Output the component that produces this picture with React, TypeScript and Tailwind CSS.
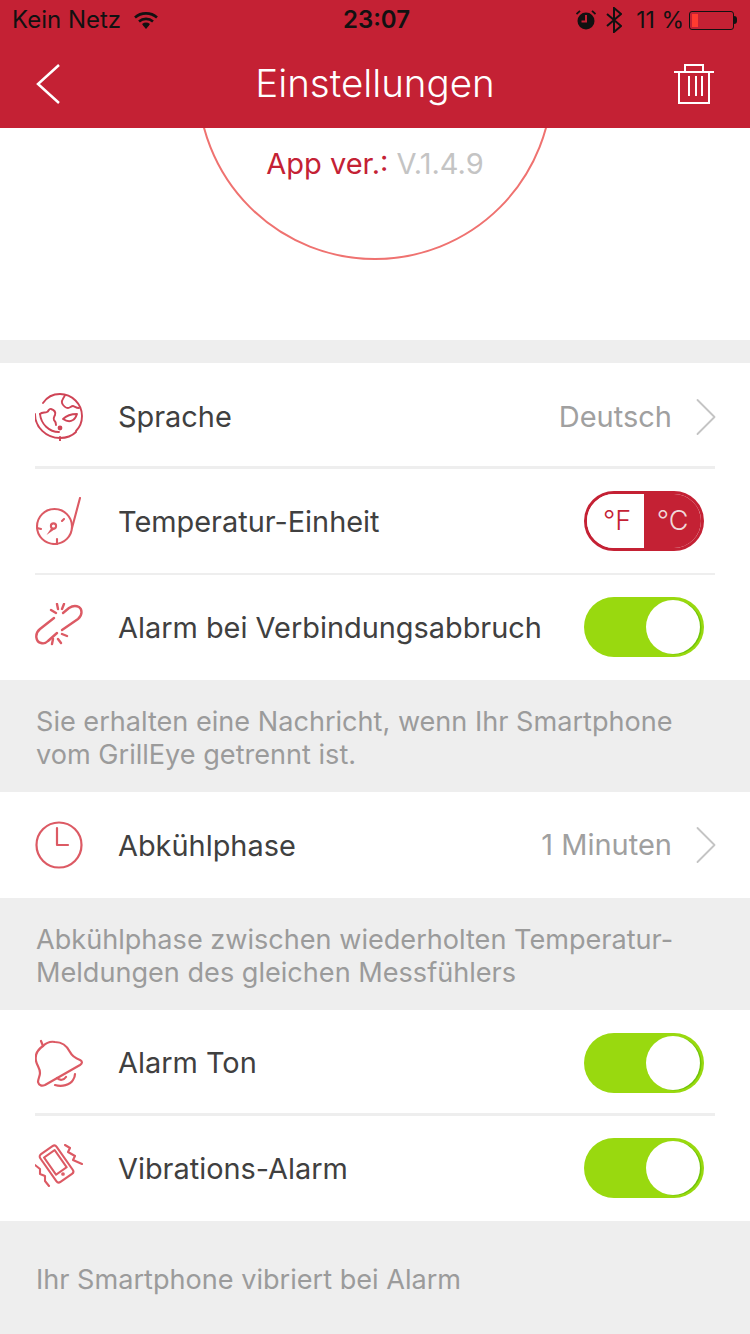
import { ChevronRight } from 'lucide-react';
import type { ReactNode } from 'react';

const iconClass = 'w-[48px] h-[48px] shrink-0 mr-[35px] fill-none stroke-[#dc5a64]';

function GlobeIcon() {
  return (
    <svg viewBox="0 0 48 48" className={iconClass} style={{ stroke: '#cf4456' }} strokeWidth="1.9" strokeLinecap="round" strokeLinejoin="round">
      <path d="M8 10C12 4 18 1 25 1c12 0 22 10 22 22 0 6-2 11-6 15" />
      <path d="M0 21c0 13 11 24 25 24 7 0 12-2 16-6M5 21c1 10 9 18 19 18M25 44v4" />
      <path d="M5 21c2-2 5-1 7-2 2-1 2-4 4-3 3 1 5 3 4 6-1 2-2 3-1 5 1 1 2 3 2 5" />
      <path d="M30 2c-1 3-4 5-3 8 1 3 4 5 6 5 2 0 3-2 5-2 1 0 3 2 6 2" />
      <path d="M28 26c3-3 7-5 14-5-1 3-2 5-4 6-3 2-7 1-10-1z" />
      <circle cx="25" cy="35" r="2.400" fill="#cf4456" stroke="none" />
    </svg>
  );
}

function ProbeIcon() {
  return (
    <svg viewBox="0 0 48 48" className={iconClass} strokeWidth="2.100" strokeLinecap="round">
      <circle cx="19.500" cy="29.500" r="17.500" />
      <path d="M37 31L45 1M2 31l4 1M22 47v-5M29 22l-2 2" />
      <path d="M11.500 38l5.500-8 3 2z" fill="#dc5a64" stroke="none" />
      <circle cx="18.500" cy="29" r="2.600" fill="#fff" />
    </svg>
  );
}

function BrokenLinkIcon() {
  return (
    <svg viewBox="0 0 48 48" className={iconClass} strokeWidth="2.400" strokeLinecap="round" strokeLinejoin="round">
      <path d="M19 15L5 26C-1 31 1 39 6 40c3 1 5 0 7-2l9-8" />
      <path d="M27 27L43 16c5-4 4-10 1-12-4-2-7-1-10 1l-6 5" />
      <path d="M16 7l5 3M22 1l1 5M29 1l-2 5M27 31l5 2M23 36l3 4M18 36l-1 5" />
    </svg>
  );
}

function ClockIcon() {
  return (
    <svg viewBox="0 0 48 48" className={iconClass} strokeWidth="2.200" strokeLinecap="round" strokeLinejoin="round">
      <circle cx="24" cy="24" r="22.500" />
      <path d="M22 7v17h11" />
    </svg>
  );
}

function BellIcon() {
  return (
    <svg viewBox="0 0 48 48" className={iconClass} strokeWidth="2.200" strokeLinecap="round" strokeLinejoin="round">
      <path d="M8 7C2 11 0 17 1 22c1 5 4 7 4 12 0 3-2 6-2 9 1 4 4 4 7 3l35-20c3-2 2-4 0-5-5-2-8-4-10-8C32 7 27 3 20 3 15 2 11 4 8 7z" />
      <path d="M8 7L6 2M22 39c3 3 7 2 9-1M20 46c7 2 15 0 18-5 2-3 2-6 2-6" />
    </svg>
  );
}

function VibrateIcon() {
  return (
    <svg viewBox="0 0 48 48" className={iconClass} strokeWidth="2.100" strokeLinecap="round" strokeLinejoin="round">
      <rect x="11.500" y="3" width="20" height="34" rx="3" transform="rotate(-35 21.500 20)" />
      <rect x="15" y="7.500" width="13" height="21" transform="rotate(-35 21.500 20)" />
      <circle cx="28" cy="30" r="0.800" />
      <path d="M30 1l5 3-2 4 7 4-2 4 9 4M0 21l5 4v5l5 2v5l4 5" />
    </svg>
  );
}

function Chevron() {
  return <ChevronRight size={68} strokeWidth={0.65} className="text-[#c4c4c4] -my-[14px] -mr-[25px]" />;
}

function Toggle() {
  return (
    <div className="w-[120px] h-[60px] mr-[11px] rounded-full bg-[#99d90f] flex items-center justify-end pr-[4px]">
      <div className="w-[54px] h-[54px] rounded-full bg-white shadow-[1.5px_0.5px_0_#6fc408]" />
    </div>
  );
}

function UnitSwitch() {
  return (
    <div className="w-[120px] h-[60px] mr-[11px] rounded-full border-[3px] border-[#c42134] flex overflow-hidden text-[27px] font-light">
      <div className="w-[57px] flex items-center justify-center text-[#c42134] bg-white pl-[3px] pt-[1px]">°F</div>
      <div className="flex-1 flex items-center justify-center text-[#f0d8da] bg-[#c42134] pt-[1px]">°C</div>
    </div>
  );
}

function Row({ icon, label, right, h }: { icon: ReactNode; label: string; right?: ReactNode; h: string }) {
  return (
    <div className={`flex items-center ${h}`}>
      {icon}
      <span className="flex-1 text-[28.900px] text-[#404040] pt-[1px]">{label}</span>
      {right}
    </div>
  );
}

function Value({ children }: { children: string }) {
  return <span className="text-[29px] text-[#a0a0a0]">{children}</span>;
}

function Note({ children, h }: { children: ReactNode; h: string }) {
  return (
    <div className={`bg-[#eeeeee] px-[36px] pt-[3px] flex items-center text-[27.100px] leading-[33px] text-[#9b9b9b] ${h}`}>
      <p>{children}</p>
    </div>
  );
}

function Divider() {
  return <div className="h-[3px] bg-[#eeeeee]" />;
}

export default function App() {
  return (
    <div className="w-[750px] h-[1334px] overflow-hidden bg-white font-['Inter',sans-serif]">
      <header className="h-[128px] bg-[#c42134]">
        <div className="h-[40px] flex items-center justify-between pl-[12px] pr-[13px] text-[#111]">
          <div className="flex-1 flex items-center gap-[13px] text-[24px]">
            <span>Kein Netz</span>
            <svg viewBox="0 0 24 18" className="w-[24px] h-[18px]" fill="none" stroke="#111" strokeWidth="2.600">
              <path d="M1 6.500c6-5.500 16-5.500 22 0M5 10.500c4-3.500 10-3.500 14 0M8.800 14c2-1.500 4.400-1.500 6.400 0" />
              <path d="M12 18l-3-3.500c2-1.500 4-1.500 6 0z" fill="#111" stroke="none" />
            </svg>
          </div>
          <span className="font-semibold text-[24px] ml-[4px]">23:07</span>
          <div className="flex-1 flex items-center justify-end text-[23px]">
            <svg viewBox="0 0 20 20" className="w-[20px] h-[20px] mr-[10px]">
              <circle cx="10" cy="11" r="8.500" fill="#111" />
              <path d="M10 5v6.500H5.500" stroke="#c42134" strokeWidth="2" fill="none" />
              <path d="M0.500 4L4 0.800M19.500 4L16 0.800" stroke="#111" strokeWidth="1.800" />
            </svg>
            <svg viewBox="0 0 16 26" className="w-[16px] h-[26px] mr-[14px]" fill="none" stroke="#111" strokeWidth="2">
              <path d="M1 7l14 12-7 6V1l7 6L1 19" />
            </svg>
            <span className="mr-[5px]">11 %</span>
            <div className="w-[45px] h-[19px] border border-[#111] rounded-[3px] p-[2px]">
              <div className="w-[6px] h-full bg-[#ff3b30]" />
            </div>
            <div className="w-[3px] h-[8px] bg-[#111] rounded-r-sm" />
          </div>
        </div>
        <div className="h-[88px] flex items-center px-[36px]">
          <div className="w-[40px]">
            <svg viewBox="0 0 24 40" className="w-[24px] h-[40px]" fill="none" stroke="#fff" strokeWidth="2.500">
              <path d="M23 1L2 20l21 19" />
            </svg>
          </div>
          <h1 className="flex-1 text-center text-[38.500px] font-light text-white">Einstellungen</h1>
          <svg viewBox="0 0 40 40" className="w-[40px] h-[40px]" fill="none" stroke="#fff" strokeWidth="2">
            <path d="M0 8h40M5 8v31h30V8M11 8V1h18v7M15 12v20M22 12v20M28 12v20" />
          </svg>
        </div>
      </header>

      <section className="h-[212px] overflow-hidden flex flex-col items-center">
        <div className="w-[356px] h-[356px] shrink-0 -mt-[224px] rounded-full border-2 border-[#ef7270] flex items-end justify-center pb-[73px] text-[29px]">
          <p><span className="text-[#c42134]">App ver.: </span><span className="text-[#c4c4c4]">V.1.4.9</span></p>
        </div>
      </section>

      <div className="h-[23px] bg-[#eeeeee]" />

      <div className="px-[35px]">
        <Row h="h-[103px] pt-[4px]" icon={<GlobeIcon />} label="Sprache" right={<><Value>Deutsch</Value><Chevron /></>} />
        <Divider />
        <Row h="h-[104px]" icon={<ProbeIcon />} label="Temperatur-Einheit" right={<UnitSwitch />} />
        <div className="h-[2px] bg-[#eeeeee]" />
        <Row h="h-[105px] pb-[1px]" icon={<BrokenLinkIcon />} label="Alarm bei Verbindungsabbruch" right={<Toggle />} />
      </div>

      <Note h="h-[112px]">Sie erhalten eine Nachricht, wenn Ihr Smartphone<br />vom GrillEye getrennt ist.</Note>

      <div className="px-[35px]">
        <Row h="h-[106px]" icon={<ClockIcon />} label="Abkühlphase" right={<><Value>1 Minuten</Value><Chevron /></>} />
      </div>

      <Note h="h-[112px]">Abkühlphase zwischen wiederholten Temperatur-<br />Meldungen des gleichen Messfühlers</Note>

      <div className="px-[35px]">
        <Row h="h-[103px] pt-[2px]" icon={<BellIcon />} label="Alarm Ton" right={<Toggle />} />
        <Divider />
        <Row h="h-[105px] pb-[1px]" icon={<VibrateIcon />} label="Vibrations-Alarm" right={<Toggle />} />
      </div>

      <Note h="h-[113px]">Ihr Smartphone vibriert bei Alarm</Note>
    </div>
  );
}
